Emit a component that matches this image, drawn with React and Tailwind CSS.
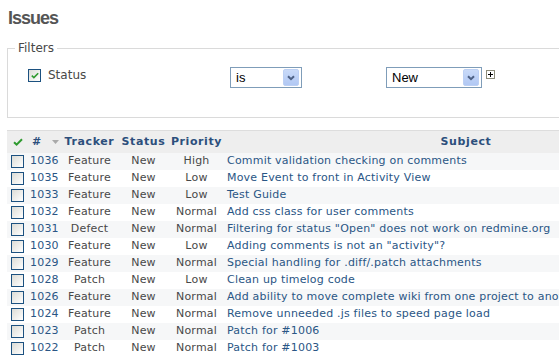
import React from "react";

const rows = [
  ["1036", "Feature", "New", "High", "Commit validation checking on comments"],
  ["1035", "Feature", "New", "Low", "Move Event to front in Activity View"],
  ["1033", "Feature", "New", "Low", "Test Guide"],
  ["1032", "Feature", "New", "Normal", "Add css class for user comments"],
  ["1031", "Defect", "New", "Normal", 'Filtering for status "Open" does not work on redmine.org'],
  ["1030", "Feature", "New", "Low", 'Adding comments is not an "activity"?'],
  ["1029", "Feature", "New", "Normal", "Special handling for .diff/.patch attachments"],
  ["1028", "Patch", "New", "Low", "Clean up timelog code"],
  ["1026", "Feature", "New", "Normal", "Add ability to move complete wiki from one project to another"],
  ["1024", "Feature", "New", "Normal", "Remove unneeded .js files to speed page load"],
  ["1023", "Patch", "New", "Normal", "Patch for #1006"],
  ["1022", "Patch", "New", "Normal", "Patch for #1003"],
];

const Check = ({ className = "" }) => (
  <svg viewBox="0 0 10 8" className={className}>
    <path d="M1 4.2 L3.6 6.6 L9 1.2" fill="none" stroke="#2f9a2f" strokeWidth="2" />
  </svg>
);

const Box = ({ checked }) => (
  <span className="inline-flex w-[13px] h-[13px] items-center justify-center border border-[#1c5180] bg-gradient-to-br from-[#dcdcd6] to-white align-middle">
    {checked && <Check className="w-[8px] h-[7px]" />}
  </span>
);

const Select = ({ value, width }) => (
  <div
    className={`${width} h-[21px] border border-[#7f9db9] bg-white flex items-center justify-between pl-[5px] pr-[2px]`}
  >
    <span className="text-[13px] text-black" style={{ fontFamily: '"Liberation Sans", Arial, sans-serif' }}>
      {value}
    </span>
    <span className="w-[16px] h-[17px] rounded-[2px] bg-gradient-to-b from-[#c9daf8] to-[#b1c8f4] border border-[#bcd0f4] flex items-center justify-center">
      <svg viewBox="0 0 8 6" className="w-[8px] h-[6px]">
        <path d="M1 1.2 L4 4.2 L7 1.2" fill="none" stroke="#4d6185" strokeWidth="2" />
      </svg>
    </span>
  </div>
);

export default function App() {
  return (
    <div
      className="w-[559px] h-[355px] overflow-hidden bg-white text-[#484848]"
      style={{ fontFamily: '"DejaVu Sans", Verdana, sans-serif' }}
    >
      <div className="w-[760px] pl-[7px]">
        <h2
          className="pl-[1px] pt-[5px] h-[34px] text-[18px] font-bold text-[#555] tracking-[-1px]"
          style={{ fontFamily: '"Liberation Sans", Arial, sans-serif' }}
        >
          Issues
        </h2>

        <fieldset className="border border-[#dadada] mt-[5px] h-[79px] pl-[20px] pr-2 pt-[12px]">
          <legend className="ml-[-13px] px-[3px] text-[12px] text-[#484848]">Filters</legend>
          <div className="flex items-start">
            <div className="w-[202px] flex items-center gap-[7px]">
              <Box checked />
              <span className="text-[12px] leading-[13px]">Status</span>
            </div>
            <div className="flex items-start mt-[-2px]">
              <Select value="is" width="w-[72px]" />
              <div className="w-[84px]" />
              <Select value="New" width="w-[96px]" />
              <span className="ml-[4px] mt-[3px] w-[9px] h-[9px] border border-[#8c8c7a] bg-white flex items-center justify-center">
                <svg viewBox="0 0 7 7" className="w-[7px] h-[7px]">
                  <path d="M3.5 1 V6 M1 3.5 H6" stroke="#000" strokeWidth="1" />
                </svg>
              </span>
            </div>
          </div>
        </fieldset>

        <table className="mt-[12px] border-collapse text-[11px] w-[700px]">
          <thead>
            <tr className="bg-[#eee] border-t border-[#ddd] h-[22px] text-[#2c4f7c] tracking-[0.6px]">
              <th className="w-[21px] p-0">
                <div className="flex justify-center pl-[1px]">
                  <Check className="w-[10px] h-[8px]" />
                </div>
              </th>
              <th className="w-[32px] p-0 text-left font-bold">
                <span className="pl-[4px]">#</span>
                <svg viewBox="0 0 7 4" className="inline-block w-[7px] h-[4px] ml-[10px] align-middle">
                  <path d="M0 0 H7 L3.5 4 Z" fill="#a9a9a9" />
                </svg>
              </th>
              <th className="w-[59px] p-0 font-bold">Tracker</th>
              <th className="w-[49px] p-0 font-bold">Status</th>
              <th className="w-[57px] p-0 font-bold">Priority</th>
              <th className="p-0 font-bold">Subject</th>
            </tr>
          </thead>
          <tbody className="tracking-[0.2px]">
            {rows.map((r, i) => (
              <tr key={r[0]} className={`h-[17px] ${i % 2 === 0 ? "bg-[#f6f7f8]" : "bg-white"}`}>
                <td className="p-0 text-center leading-none">
                  <Box />
                </td>
                <td className="p-0 pl-[2px] text-[#2a5685]">{r[0]}</td>
                <td className="p-0 text-center">{r[1]}</td>
                <td className="p-0 text-center">{r[2]}</td>
                <td className="p-0 text-center">{r[3]}</td>
                <td className="p-0 pl-[2px] text-[#2a5685] whitespace-nowrap">{r[4]}</td>
              </tr>
            ))}
          </tbody>
        </table>
      </div>
    </div>
  );
}
